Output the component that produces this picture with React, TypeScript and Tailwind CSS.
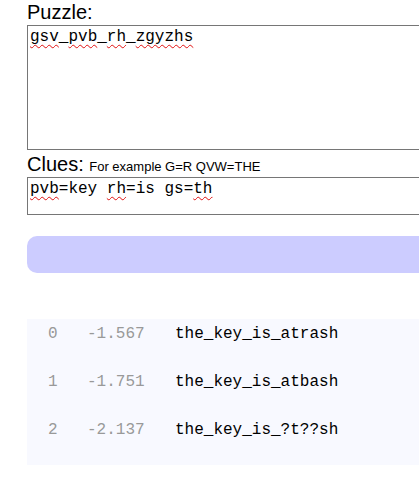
const MONO = '[font-family:"Liberation_Mono","Courier_New",monospace]'

function Typo({ children }: { children: React.ReactNode }) {
  return (
    <span className="underline decoration-wavy decoration-[#e01010] decoration-1 underline-offset-[3px] [text-decoration-skip-ink:none]">
      {children}
    </span>
  )
}

const results = [
  { i: 0, score: '-1.567', text: 'the_key_is_atrash' },
  { i: 1, score: '-1.751', text: 'the_key_is_atbash' },
  { i: 2, score: '-2.137', text: 'the_key_is_?t??sh' },
]

export default function App() {
  return (
    <div className="w-screen h-screen overflow-hidden bg-white [font-family:'Liberation_Sans',Arial,sans-serif] text-black">
      <div className="pl-[27px] w-[460px]">
        {/* Puzzle */}
        <div className="pt-px text-[20px] leading-[23px]">Puzzle:</div>
        <div
          className={`mt-px h-[125px] border border-[#767676] px-[2px] pt-[2px] text-[16px] leading-[18px] whitespace-pre ${MONO}`}
        >
          <Typo>gsv</Typo>_<Typo>pvb</Typo>_<Typo>rh</Typo>_<Typo>zgyzhs</Typo>
        </div>

        {/* Clues */}
        <div className="mt-[2px] pt-px h-[24px] text-[20px] leading-[23px]">
          Clues: <span className="text-[13px] leading-none">For example G=R QVW=THE</span>
        </div>
        <div
          className={`mt-px h-[38px] border border-[#767676] px-[2px] pt-[2px] text-[16px] leading-[18px] whitespace-pre ${MONO}`}
        >
          <Typo>pvb</Typo>=key <Typo>rh</Typo>=is gs=<Typo>th</Typo>
        </div>

        {/* Solve button */}
        <div className="mt-[21px] h-[37px] rounded-[10px] bg-[#ccccff]" />

        {/* Results */}
        <div className={`mt-[46px] h-[146px] bg-[#f8f9ff] pt-[6px] flex flex-col gap-[30px] text-[16px] leading-[18px] ${MONO}`}>
          {results.map((r) => (
            <div key={r.i} className="flex whitespace-pre">
              <span className="w-[60px] pl-[21px] text-[#999999]">{r.i}</span>
              <span className="w-[88px] text-[#999999]">{r.score}</span>
              <span>{r.text}</span>
            </div>
          ))}
        </div>
      </div>
    </div>
  )
}
